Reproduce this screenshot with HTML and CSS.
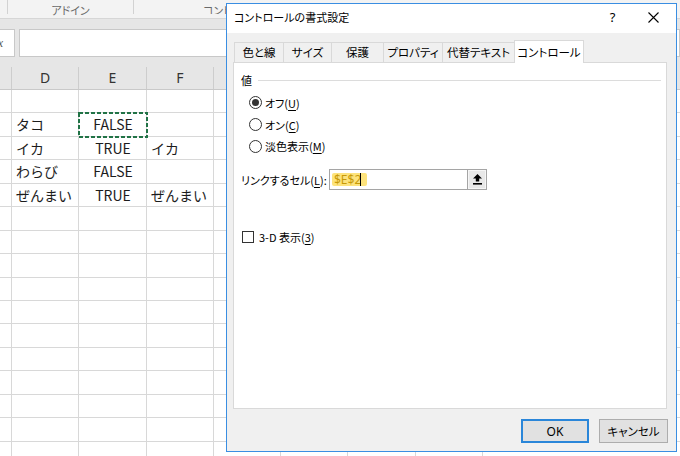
FILE: index.html
```html
<!DOCTYPE html>
<html lang="ja">
<head>
<meta charset="utf-8">
<title>コントロールの書式設定</title>
<link rel="stylesheet" href="styles.css">
</head>
<body>
<div class="sheet-app">
  <div class="ribbon">
    <div class="grp g0"></div>
    <div class="grp g1"><span>アドイン</span></div>
    <div class="grp g2"><span class="clip">コントロール</span></div>
  </div>
  <div class="fbar">
    <div class="fx"><span>fx</span></div>
    <div class="finput"></div>
  </div>
  <div class="colhead">
    <div class="hc cc"></div>
    <div class="hc cd">D</div>
    <div class="hc ce">E</div>
    <div class="hc cf">F</div>
    <div class="hc cg">G</div>
    <div class="hc cg">H</div>
    <div class="hc cg">I</div>
    <div class="hc cg">J</div>
    <div class="hc cg">K</div>
    <div class="hc cg">L</div>
  </div>
  <div class="rows">
    <div class="row"></div>
    <div class="row">
      <div class="cell cc"></div>
      <div class="cell cd">タコ</div>
      <div class="cell ce sel">FALSE<svg class="marquee" width="70" height="26" viewBox="0 0 70 26"><rect x="1" y="1" width="68" height="24" fill="none" stroke="#217346" stroke-width="2" stroke-dasharray="4 2"/></svg></div>
      <div class="cell cf"></div>
    </div>
    <div class="row">
      <div class="cell cc"></div>
      <div class="cell cd">イカ</div>
      <div class="cell ce">TRUE</div>
      <div class="cell cf">イカ</div>
    </div>
    <div class="row">
      <div class="cell cc"></div>
      <div class="cell cd">わらび</div>
      <div class="cell ce">FALSE</div>
      <div class="cell cf"></div>
    </div>
    <div class="row">
      <div class="cell cc"></div>
      <div class="cell cd">ぜんまい</div>
      <div class="cell ce">TRUE</div>
      <div class="cell cf">ぜんまい</div>
    </div>
    <div class="row"></div>
    <div class="row"></div>
    <div class="row"></div>
    <div class="row"></div>
    <div class="row"></div>
    <div class="row"></div>
    <div class="row"></div>
    <div class="row"></div>
    <div class="row"></div>
    <div class="row"></div>
    <div class="row"></div>
  </div>
</div>

<div class="dialog">
  <div class="titlebar">
    <span class="title">コントロールの書式設定</span>
    <span class="tb-btn help">?</span>
    <span class="tb-btn close"><svg width="11" height="11" viewBox="0 0 11 11"><path d="M0.5 0.5 L10.5 10.5 M10.5 0.5 L0.5 10.5" stroke="#000" stroke-width="1.1" fill="none"/></svg></span>
  </div>
  <div class="dlg-body">
    <div class="tabs">
      <div class="tab t1">色と線</div>
      <div class="tab t2">サイズ</div>
      <div class="tab t3">保護</div>
      <div class="tab t4">プロパティ</div>
      <div class="tab t5">代替テキスト</div>
      <div class="tab t6 active">コントロール</div>
    </div>
    <div class="panel">
      <div class="group-head"><span>値</span><span class="rule"></span></div>
      <div class="radios">
        <div class="radio-row"><span class="radio on"></span><span>オフ(<u>U</u>)</span></div>
        <div class="radio-row"><span class="radio"></span><span>オン(<u>C</u>)</span></div>
        <div class="radio-row"><span class="radio"></span><span>淡色表示(<u>M</u>)</span></div>
      </div>
      <div class="link-row">
        <span class="link-label">リンクするセル(<u>L</u>):</span>
        <div class="ref-input">
          <div class="ref-field"><span class="ref-hl">$E$2</span><span class="caret"></span></div>
          <div class="ref-btn"><svg width="9" height="11" viewBox="0 0 9 11"><path d="M4.5 0 L9 4.6 H6.2 V7.6 H2.8 V4.6 H0 Z" fill="#000"/><rect x="0" y="9" width="9" height="1.6" fill="#000"/></svg></div>
        </div>
      </div>
      <div class="check-row"><span class="checkbox"></span><span>3-D 表示(<u>3</u>)</span></div>
    </div>
    <div class="buttons">
      <div class="btn default">OK</div>
      <div class="btn">キャンセル</div>
    </div>
  </div>
</div>
</body>
</html>
```
FILE: styles.css
```css
* { box-sizing: border-box; }
html, body { margin: 0; padding: 0; }
body {
  width: 680px;
  height: 456px;
  overflow: hidden;
  position: relative;
  background: #fff;
  font-family: "Noto Sans CJK JP", "Noto Sans", sans-serif;
  color: #000;
}

/* ---------- spreadsheet behind ---------- */
.ribbon {
  height: 19px;
  background: #f3f3f3;
  border-bottom: 1px solid #d6d6d6;
  display: flex;
}
.grp {
  height: 14px;
  font-size: 11px;
  line-height: 20px;
  color: #6a6a6a;
  white-space: nowrap;
  font-feature-settings: "palt";
}
.g0 { width: 8px; border-right: 1px solid #d2d2d2; }
.g1 { width: 126px; border-right: 1px solid #d2d2d2; text-align: center; }
.g2 { flex: 1; padding-left: 69px; overflow: hidden; }
.g2 .clip {
  display: inline-block;
  width: 23px;
  overflow: hidden;
  vertical-align: top;
}

.fbar {
  height: 48px;
  background: #e6e6e6;
  display: flex;
  gap: 4px;
  padding: 10px 0;
}
.fx {
  width: 15px;
  background: #fff;
  border: 1px solid #c8c8c8;
  border-left: none;
  overflow: hidden;
  display: flex;
  justify-content: flex-end;
  align-items: center;
  padding-right: 11px;
  font: italic 12px "Liberation Serif", serif;
  color: #555;
}
.finput {
  flex: 1;
  background: #fff;
  border: 1px solid #c8c8c8;
}

.colhead {
  height: 23px;
  display: flex;
  background: #e6e6e6;
  border-bottom: 1px solid #c9c9c9;
}
.hc {
  flex: none;
  height: 22px;
  border-right: 1px solid #cdcdcd;
  font-size: 14px;
  line-height: 22px;
  text-align: center;
  color: #333;
  font-family: "Noto Sans", sans-serif;
}
.cc { width: 12px; }
.cd { width: 67px; }
.ce { width: 68px; }
.cf { width: 67px; }
.cg { width: 67px; }

.rows {
  background-image: linear-gradient(90deg,
    transparent 11px, #d8d8d8 11px 12px,
    transparent 12px 78px, #d8d8d8 78px 79px,
    transparent 79px 146px, #d8d8d8 146px 147px,
    transparent 147px 213px, #d8d8d8 213px 214px,
    transparent 214px 280px, #d8d8d8 280px 281px,
    transparent 281px 347px, #d8d8d8 347px 348px,
    transparent 348px 415px, #d8d8d8 415px 416px,
    transparent 416px 482px, #d8d8d8 482px 483px,
    transparent 483px);
}
.row {
  height: 23.45px;
  border-bottom: 1px solid #d8d8d8;
  display: flex;
}
.cell {
  flex: none;
  height: 22.45px;
  font-size: 14px;
  line-height: 23px;
  color: #1c1c1c;
  white-space: nowrap;
  padding-left: 4px;
}
.cell.ce { text-align: center; padding-left: 0; position: relative; }
.cell.sel .marquee {
  position: absolute;
  left: -1px;
  top: -1px;
}

/* ---------- dialog ---------- */
.dialog {
  position: absolute;
  left: 226px;
  top: 3px;
  width: 451px;
  height: 449px;
  border: 1px solid #3a8ee2;
  background: #f0f0f0;
  font-size: 11px;
  font-feature-settings: "palt";
  display: flex;
  flex-direction: column;
}
.titlebar {
  height: 29px;
  background: #fff;
  display: flex;
  align-items: center;
  padding: 0 2px 3px 7px;
}
.title { flex: 1; font-size: 11px; line-height: 20px; }
.tb-btn {
  width: 41px;
  height: 20px;
  display: flex;
  align-items: center;
  justify-content: center;
}
.help { font-family: "Noto Sans", sans-serif; font-size: 13px; }

.dlg-body {
  flex: 1;
  display: flex;
  flex-direction: column;
  padding: 7px 8px 8px 6px;
}
.tabs {
  display: flex;
  height: 22px;
  margin-left: 1px;
  align-items: flex-end;
  position: relative;
  z-index: 1;
}
.tab {
  height: 20px;
  border: 1px solid #d9d9d9;
  border-bottom: none;
  border-right: none;
  background: #f0f0f0;
  text-align: center;
  line-height: 19px;
  white-space: nowrap;
  font-size: 11.5px;
}
.t1 { width: 49px; }
.t2 { width: 48px; }
.t3 { width: 52px; }
.t4 { width: 59px; }
.t5 { width: 72px; }
.t6 { width: 70px; }
.tab.active {
  height: 23px;
  margin-bottom: -1px;
  background: #fff;
  border-right: 1px solid #d9d9d9;
  line-height: 22px;
}
.panel {
  height: 347px;
  width: 434px;
  background: #fff;
  border: 1px solid #d9d9d9;
  padding: 8px 5px 0 7px;
}
.group-head {
  height: 18px;
  display: flex;
  align-items: center;
}
.group-head .rule {
  flex: 1;
  border-top: 1px solid #dcdcdc;
  margin-left: 6px;
}
.radios {
  margin-top: 3px;
  padding-left: 8px;
}
.radio-row {
  height: 21.7px;
  display: flex;
  align-items: center;
  gap: 3px;
}
.radio {
  width: 13px;
  height: 13px;
  border: 1px solid #333;
  border-radius: 50%;
  background: #fff;
  display: flex;
  align-items: center;
  justify-content: center;
}
.radio.on::after {
  content: "";
  width: 7px;
  height: 7px;
  border-radius: 50%;
  background: #333;
}
.link-row {
  margin-top: 12px;
  height: 21px;
  display: flex;
  align-items: center;
}
.link-label { width: 88px; white-space: nowrap; }
.ref-input {
  display: flex;
  height: 21px;
}
.ref-field {
  width: 138px;
  height: 21px;
  border: 1px solid #a5a5a5;
  border-right: none;
  background: #fff;
  display: flex;
  align-items: center;
  padding-left: 2px;
}
.ref-hl {
  background: #fde37c;
  color: #c79a08;
  font-family: "Noto Sans", sans-serif;
  font-size: 12px;
  line-height: 13px;
  padding: 0 6px 0 2px;
  border-radius: 2px;
  display: flex;
  align-items: center;
  height: 13px;
}
.caret {
  width: 1px;
  height: 13px;
  background: #000;
  margin-left: -7px;
}
.ref-btn {
  width: 20px;
  height: 21px;
  border: 1px solid #a5a5a5;
  background: #e8e8e8;
  box-shadow: inset 0 0 0 1px #f6f6f6;
  display: flex;
  align-items: center;
  justify-content: center;
}
.check-row {
  margin-top: 40px;
  height: 14px;
  display: flex;
  align-items: center;
  gap: 5px;
  padding-left: 1px;
}
.checkbox {
  width: 12px;
  height: 12px;
  border: 1px solid #333;
  background: #fff;
}
.buttons {
  margin-top: 10px;
  display: flex;
  justify-content: flex-end;
  gap: 10px;
}
.btn {
  width: 69px;
  height: 24px;
  border: 1px solid #adadad;
  background: #e1e1e1;
  display: flex;
  align-items: center;
  justify-content: center;
  font-size: 11.5px;
}
.btn.default {
  width: 68px;
  border: 2px solid #2a86d9;
  font-family: "Noto Sans", sans-serif;
  font-size: 12px;
}
u { text-decoration-thickness: 1px; text-underline-offset: 2px; }
```
